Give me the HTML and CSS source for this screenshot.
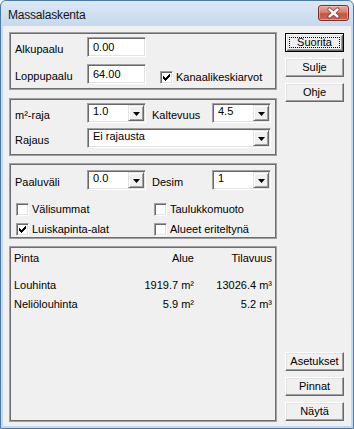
FILE: index.html
```html
<!DOCTYPE html>
<html>
<head>
<meta charset="utf-8">
<link rel="stylesheet" href="styles.css">
</head>
<body>
<div class="window">
  <div class="titlebar">
    <span class="title">Massalaskenta</span>
    <div class="close">
      <svg width="31" height="16" viewBox="0 0 31 16">
        <path d="M11.5 4.5L19.5 11.5M19.5 4.5L11.5 11.5" stroke="#6b2e28" stroke-width="4.2" stroke-linecap="round" fill="none" opacity="0.75"/>
        <path d="M11.5 4.5L19.5 11.5M19.5 4.5L11.5 11.5" stroke="#ffffff" stroke-width="2.4" stroke-linecap="round" fill="none"/>
      </svg>
    </div>
  </div>
  <div class="client">
    <div class="main">
      <div class="group g1">
        <div class="row">
          <span class="lbl">Alkupaalu</span>
          <div class="edit">0.00</div>
        </div>
        <div class="row row-next">
          <span class="lbl">Loppupaalu</span>
          <div class="edit">64.00</div>
          <div class="check check-kanaali">
            <span class="cb"><svg width="11" height="11" viewBox="0 0 11 11"><path d="M2 4h1v3H2z M3 5h1v3H3z M4 6h1v3H4z M5 5h1v3H5z M6 4h1v3H6z M7 3h1v3H7z M8 2h1v3H8z" fill="#000"/></svg></span>
            <span>Kanaalikeskiarvot</span>
          </div>
        </div>
      </div>

      <div class="group g2">
        <div class="row">
          <span class="lbl">m²-raja</span>
          <div class="combo"><span class="ctext">1.0</span><span class="dd"><svg width="7" height="4" viewBox="0 0 7 4"><path d="M0 0h7L3.5 4z" fill="#000"/></svg></span></div>
          <span class="lbl lbl2">Kaltevuus</span>
          <div class="combo"><span class="ctext">4.5</span><span class="dd"><svg width="7" height="4" viewBox="0 0 7 4"><path d="M0 0h7L3.5 4z" fill="#000"/></svg></span></div>
        </div>
        <div class="row row-combo">
          <span class="lbl">Rajaus</span>
          <div class="combo wide"><span class="ctext">Ei rajausta</span><span class="dd"><svg width="7" height="4" viewBox="0 0 7 4"><path d="M0 0h7L3.5 4z" fill="#000"/></svg></span></div>
        </div>
      </div>

      <div class="group g3">
        <div class="row">
          <span class="lbl">Paaluväli</span>
          <div class="combo"><span class="ctext">0.0</span><span class="dd"><svg width="7" height="4" viewBox="0 0 7 4"><path d="M0 0h7L3.5 4z" fill="#000"/></svg></span></div>
          <span class="lbl lbl2">Desim</span>
          <div class="combo"><span class="ctext">1</span><span class="dd"><svg width="7" height="4" viewBox="0 0 7 4"><path d="M0 0h7L3.5 4z" fill="#000"/></svg></span></div>
        </div>
        <div class="checkgrid">
          <div class="check"><span class="cb"></span><span>Välisummat</span></div>
          <div class="check"><span class="cb"></span><span>Taulukkomuoto</span></div>
          <div class="check"><span class="cb"><svg width="11" height="11" viewBox="0 0 11 11"><path d="M2 4h1v3H2z M3 5h1v3H3z M4 6h1v3H4z M5 5h1v3H5z M6 4h1v3H6z M7 3h1v3H7z M8 2h1v3H8z" fill="#000"/></svg></span><span>Luiskapinta-alat</span></div>
          <div class="check"><span class="cb"></span><span>Alueet eriteltynä</span></div>
        </div>
      </div>

      <div class="group g4">
        <div class="results">
          <span class="hdr">Pinta</span><span class="num hdr">Alue</span><span class="num hdr">Tilavuus</span>
          <span>Louhinta</span><span class="num">1919.7 m²</span><span class="num">13026.4 m³</span>
          <span>Neliölouhinta</span><span class="num">5.9 m²</span><span class="num">5.2 m³</span>
        </div>
      </div>
    </div>

    <div class="side">
      <div class="btngroup">
        <div class="btn default">Suorita</div>
        <div class="btn">Sulje</div>
        <div class="btn">Ohje</div>
      </div>
      <div class="btngroup">
        <div class="btn">Asetukset</div>
        <div class="btn">Pinnat</div>
        <div class="btn">Näytä</div>
      </div>
    </div>
  </div>
</div>
</body>
</html>
```

FILE: styles.css
```css
* { box-sizing: border-box; }
html, body { margin: 0; padding: 0; }
body {
  width: 354px;
  height: 429px;
  font-family: "Liberation Sans", Arial, sans-serif;
  font-size: 11px;
  color: #000;
  background: #ffffff;
}
.window {
  width: 354px;
  height: 429px;
  display: flex;
  flex-direction: column;
  border: 1px solid #4d79a6;
  border-radius: 6px 6px 0 0;
  background: linear-gradient(#dbe8f6, #c6d9ee 25px, #c3d7ee);
  overflow: hidden;
}
.titlebar {
  height: 25px;
  flex: none;
  display: flex;
  justify-content: space-between;
  align-items: flex-start;
  padding: 0 4px 0 7px;
}
.title {
  font-size: 12px;
  line-height: 14px;
  margin-top: 7px;
  color: #151515;
  letter-spacing: -0.2px;
}
.close {
  width: 31px;
  height: 16px;
  margin-top: 4px;
  border: 1px solid #7e2f25;
  border-radius: 3px;
  background: linear-gradient(#eaa596 0%, #da7f6e 45%, #c9553f 55%, #cc6450 100%);
  box-shadow: inset 0 0 0 1px rgba(255, 220, 210, 0.45);
  display: flex;
  align-items: center;
  justify-content: center;
}
.close svg { display: block; margin: -1px; }
.client {
  flex: 1;
  margin: 0 2px 2px;
  background: #f0f0f0;
  display: flex;
  gap: 8px;
  padding: 6px 7px 4px 6px;
}
.main {
  width: 268px;
  display: flex;
  flex-direction: column;
}
.group {
  border: 1px solid #a0a0a0;
  box-shadow: inset 0 0 0 1px #6d6d6d;
}
.g1 { height: 58px; padding: 4px 5px 0; margin-bottom: 8px; }
.g2 { height: 58px; padding: 4px 5px 0; margin-bottom: 7px; }
.g3 { height: 76px; padding: 6px 5px 0; margin-bottom: 7px; }
.g4 { height: 176px; padding: 5px 4px 0; }

.row {
  display: flex;
  align-items: flex-end;
}
.row-next { margin-top: 7px; }
.row-combo { margin-top: 5px; }
.lbl {
  width: 72px;
  flex: none;
  line-height: 13px;
  padding-bottom: 1px;
}
.lbl2 {
  width: 60px;
  margin-left: 6px;
}
.edit {
  width: 59px;
  height: 20px;
  flex: none;
  background: #fff;
  border: 1px solid;
  border-color: #a0a0a0 #fff #fff #a0a0a0;
  box-shadow: inset 1px 1px 0 #696969, inset -1px -1px 0 #e3e3e3;
  padding: 3px 5px 0;
  line-height: 13px;
}
.combo {
  width: 59px;
  height: 20px;
  flex: none;
  display: flex;
  background: #fff;
  border: 1px solid;
  border-color: #a0a0a0 #fff #fff #a0a0a0;
  box-shadow: inset 1px 1px 0 #696969, inset -1px -1px 0 #e3e3e3;
  padding: 1px;
}
.combo.wide { flex: 1; width: auto; }
.ctext {
  flex: 1;
  padding-left: 4px;
  line-height: 13px;
}
.dd {
  width: 16px;
  height: 16px;
  flex: none;
  background: #f0f0f0;
  border: 1px solid;
  border-color: #e3e3e3 #696969 #696969 #e3e3e3;
  box-shadow: inset 1px 1px 0 #fff, inset -1px -1px 0 #a0a0a0;
  display: flex;
  align-items: center;
  justify-content: center;
  padding-top: 1px;
}
.dd svg { display: block; }
.check {
  display: flex;
  align-items: center;
  gap: 3px;
  line-height: 13px;
  height: 13px;
}
.check-kanaali { margin-left: 14px; }
.cb {
  width: 13px;
  height: 13px;
  flex: none;
  background: #fff;
  border: 1px solid;
  border-color: #a0a0a0 #fff #fff #a0a0a0;
  box-shadow: inset 1px 1px 0 #696969, inset -1px -1px 0 #e3e3e3;
}
.cb svg { display: block; }
.checkgrid {
  display: grid;
  grid-template-columns: 138px 1fr;
  row-gap: 7px;
  margin-top: 13px;
  margin-left: 1px;
}
.results {
  display: grid;
  grid-template-columns: 100px 80px 78px;
  line-height: 13px;
  row-gap: 6px;
}
.results .hdr { margin-bottom: 8px; }
.num { text-align: right; }

.side {
  width: 59px;
  display: flex;
  flex-direction: column;
  justify-content: space-between;
  padding: 1px 0;
}
.btngroup {
  display: flex;
  flex-direction: column;
  gap: 6px;
}
.btn {
  height: 19px;
  display: flex;
  align-items: center;
  justify-content: center;
  line-height: 13px;
  background: #f0f0f0;
  border: 1px solid;
  border-color: #fff #696969 #696969 #fff;
  box-shadow: inset -1px -1px 0 #a0a0a0, inset 1px 1px 0 #e3e3e3;
}
.btn.default {
  position: relative;
  border: 1px solid #000;
  box-shadow: inset 1px 1px 0 #fff, inset -1px -1px 0 #696969, inset 2px 2px 0 #e3e3e3, inset -2px -2px 0 #a0a0a0;
}
.btn.default::after {
  content: "";
  position: absolute;
  left: 3px;
  right: 3px;
  top: 3px;
  bottom: 3px;
  border: 1px dotted #000;
}
```
